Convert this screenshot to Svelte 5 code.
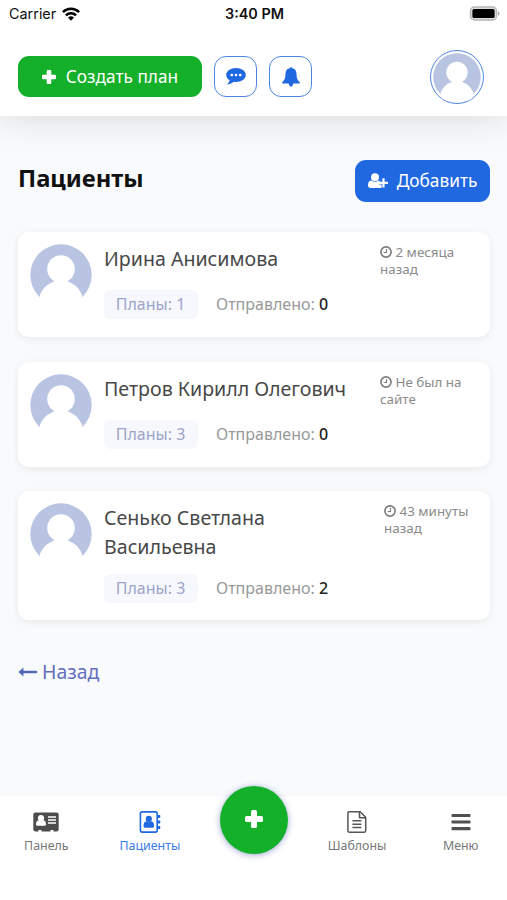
<script>
    let pacientes = [
        {
            nombre: "Ирина Анисимова",
            planes: 1,
            enviados: 0,
            visita: "2 месяца назад",
            ancho: 98,
        },
        {
            nombre: "Петров Кирилл Олегович",
            planes: 3,
            enviados: 0,
            visita: "Не был на сайте",
            ancho: 98,
        },
        {
            nombre: "Сенько Светлана Васильевна",
            planes: 3,
            enviados: 2,
            visita: "43 минуты назад",
            ancho: 94,
        },
    ];
    let activo = "Пациенты";
</script>

{#snippet avatar()}
    <svg class="avatar" viewBox="0 0 62 62">
        <circle cx="31" cy="31" r="30.7" fill="#b9c4e2" />
        <circle cx="31" cy="25" r="13.8" fill="#fff" />
        <path
            d="M25 35.500h12c.2 1.500 1 2.200 3 2.900 5.500 2.200 9.500 6.300 12 12.600L54 62H8l2-11c2.500-6.300 6.500-10.400 12-12.600 2-.7 2.800-1.400 3-2.900z"
            fill="#fff"
        />
    </svg>
{/snippet}

{#snippet mas(size)}
    <svg width={size} height={size} viewBox="0 0 14 14">
        <path
            d="M5.900 0h2.200q1.200 0 1.200 1.200v3.500h3.500q1.200 0 1.200 1.200v2.200q0 1.200-1.200 1.200H9.300v3.500q0 1.200-1.200 1.200H5.900q-1.200 0-1.200-1.200V9.300H1.200Q0 9.300 0 8.100V5.900q0-1.200 1.200-1.200h3.500V1.200Q4.700 0 5.900 0z"
            fill="#fff"
        />
    </svg>
{/snippet}

<div class="pantalla">
    <header>
        <div class="estado">
            <div class="operador">
                <span>Carrier</span>
                <svg width="18" height="14" viewBox="0 0 18 14">
                    <g fill="none" stroke="#000" stroke-width="2.500">
                        <path d="M.9 5.200a11.500 11.500 0 0 1 16.200 0" />
                        <path d="M3.900 8.400a7.200 7.200 0 0 1 10.200 0" />
                    </g>
                    <path d="M9 13.800l-3-3.200a4.300 4.300 0 0 1 6 0z" />
                </svg>
            </div>
            <div class="hora">3:40 PM</div>
            <div class="bateria">
                <svg width="31" height="15" viewBox="0 0 31 15">
                    <rect x="1.500" y="1" width="26" height="13" rx="3.800" fill="#ddd" stroke="#b5b5b5" stroke-width="1.300" />
                    <rect x="3.400" y="2.900" width="22.200" height="9.200" rx="1.600" />
                    <path d="M28.800 5.200c2.200.5 2.200 4.100 0 4.600z" fill="#aaa" />
                </svg>
            </div>
        </div>
        <div class="barra">
            <button class="btn verde">{@render mas(14)}<span>Создать план</span></button>
            <button class="btn cuadro" aria-label="Сообщения">
                <svg width="20" height="17" viewBox="0 0 20 17">
                    <path d="M10 0c5.500 0 9.800 3.100 9.800 7s-4.300 7-9.800 7c-.8 0-1.500-.1-2.200-.2C6 15.300 4 16.200 1.900 16.500c-.5 0-.6-.5-.3-.8 1-.9 1.700-1.700 2-3.400C1.500 11 .2 9.100.2 7c0-3.900 4.300-7 9.800-7z" fill="#2068df" />
                    <g fill="#fff">
                        <circle cx="5.800" cy="7" r="1.350" />
                        <circle cx="10" cy="7" r="1.350" />
                        <circle cx="14.200" cy="7" r="1.350" />
                    </g>
                </svg>
            </button>
            <button class="btn cuadro" aria-label="Уведомления">
                <svg width="18" height="20" viewBox="0 0 18 20">
                    <path d="M9 .2c.7 0 1.100.4 1.200 1.100 2.800.4 4.200 2.500 4.300 5.500.1 4.400.9 6.500 3.300 8.500.3.500 0 1.100-.7 1.100h-5.900c-.2 1.900-1 3.200-2.200 3.200s-2-1.300-2.200-3.200H.9c-.7 0-1-.6-.7-1.100 2.400-2 3.200-4.100 3.300-8.500.1-3 1.500-5.100 4.300-5.500C7.900.6 8.300.2 9 .2z" fill="#2068df" />
                </svg>
            </button>
            <div class="perfil">{@render avatar()}</div>
        </div>
    </header>

    <main>
        <div class="encabezado">
            <h1>Пациенты</h1>
            <button class="btn azul">
                <svg width="20" height="16" viewBox="0 0 20 16">
                    <g fill="#fff">
                        <circle cx="7" cy="4.300" r="4" />
                        <path d="M3.200 7.400c2.200 1.800 5.400 1.800 7.600 0 .8.200 1.400.5 1.900 1H11v3.200h2.600V15H2.500C1 15 0 14.100 0 12.600 0 10 .8 7.500 3.200 7.400z" />
                        <path d="M14.400 5.300h2.200v3.500H20V11h-3.400v3.500h-2.200V11H11V8.800h3.400z" />
                    </g>
                </svg>
                <span>Добавить</span>
            </button>
        </div>

        {#each pacientes as p}
            <div class="card">
                {@render avatar()}
                <div class="datos">
                    <div class="nombre">{p.nombre}</div>
                    <div class="planes">
                        <span class="etiqueta">Планы: {p.planes}</span>
                        <span class="enviado">Отправлено: <b>{p.enviados}</b></span>
                    </div>
                </div>
                <div class="visita" style="width: {p.ancho}px">
                    <svg width="12" height="12" viewBox="0 0 12 12">
                        <g fill="none" stroke="#7c7c7c">
                            <circle cx="6" cy="6" r="5.100" stroke-width="1.600" />
                            <path d="M6.500 3v3.500H3.700" stroke-width="1.100" />
                        </g>
                    </svg>
                    {p.visita}
                </div>
            </div>
        {/each}

        <a class="volver" href="#atras">
            <svg width="20" height="10" viewBox="0 0 20 10">
                <path d="M5.400.6v3.200h13q.8 0 .8.700v1q0 .7-.8.700h-13v3.200L.4 5z" fill="#5468b8" />
            </svg>
            <span>Назад</span>
        </a>
    </main>

    <nav>
        <div class="item">
            <svg width="26" height="22" viewBox="0 0 26 22">
                <path d="M2.500 1.500h21Q25.700 1.500 25.700 3.500v15q0 2-2.200 2h-3v-1.500h-3v1.500h-9v-1.500h-3v1.500H2.500Q.3 20.500.3 18.500v-15Q.3 1.500 2.500 1.500z" fill="#4d4d4d" />
                <g fill="#fff">
                    <circle cx="8" cy="7.200" r="3.100" />
                    <path d="M5.500 9.300q2.500 2 5 0 2.500.3 2.500 4.200 0 1.300-1.200 1.300H4.200Q3 14.800 3 13.500q0-3.900 2.500-4.200z" />
                    <path d="M15 5.300h8v1.500h-8zM15 8.300h8v1.500h-8zM15 11.300h8v1.500h-8z" />
                </g>
            </svg>
            <span>Панель</span>
        </div>
        <div class="item" class:activo={activo == "Пациенты"}>
            <svg width="22" height="22" viewBox="0 0 22 22">
                <g fill="#2068df">
                    <rect x="1.400" y=".9" width="16.800" height="20.200" rx="1.800" fill="none" stroke="#2068df" stroke-width="1.600" />
                    <path d="M19 4h1.500q.8 0 .8.800v1.400q0 .8-.8.800H19zM19 9.500h1.500q.8 0 .8.800v1.400q0 .8-.8.800H19zM19 15h1.500q.8 0 .8.800v1.400q0 .8-.8.800H19z" />
                    <circle cx="9.800" cy="7.900" r="3.100" />
                    <path d="M7.300 10.200q2.500 2 5 0 2.800.5 2.800 4.800 0 1.700-1.500 1.700H6q-1.500 0-1.500-1.700 0-4.300 2.800-4.800z" />
                </g>
            </svg>
            <span>Пациенты</span>
        </div>
        <div class="item">
            <button class="crear" aria-label="Создать">{@render mas(18)}</button>
        </div>
        <div class="item">
            <svg width="20" height="22" viewBox="0 0 20 22">
                <g fill="none" stroke="#555" stroke-width="1.500" stroke-linejoin="round">
                    <path d="M2.200.8h11l5.500 5.500v13.500q0 1.400-1.400 1.400H2.200q-1.300 0-1.300-1.400V2.100Q.9.800 2.200.8z" />
                    <path d="M12.500.8v6h6.200M5.400 9.800h9M5.400 13.200h9M5.400 16.600h9" />
                </g>
            </svg>
            <span>Шаблоны</span>
        </div>
        <div class="item">
            <svg width="20" height="22" viewBox="0 0 20 22">
                <g fill="#505050">
                    <rect x=".5" y="2.900" width="19" height="3.100" rx=".8" />
                    <rect x=".5" y="9.500" width="19" height="3.100" rx=".8" />
                    <rect x=".5" y="16.100" width="19" height="3.100" rx=".8" />
                </g>
            </svg>
            <span>Меню</span>
        </div>
    </nav>
</div>

<style>
    :global(body) {
        background: #f8f9fb;
    }

    .pantalla {
        display: flex;
        flex-direction: column;
        box-sizing: border-box;
        height: 900px;
        overflow: hidden;
        background: #f8fafc;
        font-family: "Noto Sans", sans-serif;
        color: #111;
    }

    .pantalla svg {
        display: block;
        flex-shrink: 0;
    }

    header {
        box-sizing: border-box;
        height: 116px;
        background: #fff;
        box-shadow: 0 0 36px rgba(0, 0, 0, 0.15);
    }

    .estado {
        display: grid;
        grid-template-columns: 1fr 1fr 1fr;
        align-items: center;
        height: 27px;
        padding: 0 7px 0 9px;
        font: 14.4px/27px Inter, sans-serif;
    }

    .operador {
        display: flex;
        align-items: center;
        gap: 6px;
    }

    .hora {
        text-align: center;
        font-weight: 600;
    }

    .bateria {
        justify-self: end;
    }

    .barra {
        display: flex;
        align-items: center;
        height: 54px;
        margin-top: 22.5px;
        padding: 0 23px 0 18px;
        gap: 12px;
    }

    .btn {
        display: flex;
        align-items: center;
        justify-content: center;
        box-sizing: border-box;
        height: 41.5px;
        padding: 0;
        border: 0;
        border-radius: 11px;
        color: #fff;
        font: 17.3px/24px "Noto Sans", sans-serif;
    }

    .verde {
        width: 184px;
        gap: 10px;
        background: #14b02a;
    }

    .cuadro {
        width: 43px;
        border: 1.5px solid #4d86e2;
        border-radius: 12px;
        background: #fff;
    }

    .perfil {
        box-sizing: border-box;
        width: 54px;
        height: 54px;
        margin-left: auto;
        padding: 2px;
        border: 1.5px solid #4d86e2;
        border-radius: 50%;
        overflow: hidden;
    }

    .avatar {
        width: 62px;
        height: 62px;
    }

    .perfil :global(.avatar) {
        width: 48px;
        height: 48px;
    }

    main {
        flex: 1;
        padding: 44px 17px 0 18px;
    }

    .encabezado {
        display: flex;
        justify-content: space-between;
        height: 42px;
        margin-bottom: 30px;
    }

    h1 {
        margin: 0;
        font-size: 23.8px;
        line-height: 36px;
        font-weight: 700;
    }

    .azul {
        width: 135px;
        gap: 9px;
        background: #2068df;
    }

    .card {
        display: flex;
        box-sizing: border-box;
        min-height: 105px;
        margin-bottom: 24.5px;
        padding: 12px 12px 17px;
        border-radius: 11px;
        background: #fff;
        box-shadow: 0 2px 9px rgba(0, 0, 0, 0.07);
    }

    .datos {
        flex: 1;
        margin-left: 12px;
    }

    .nombre {
        max-width: 250px;
        font-size: 19.6px;
        line-height: 29.3px;
        color: #484848;
    }

    .planes {
        display: flex;
        align-items: center;
        gap: 18px;
        margin-top: 17px;
        font-size: 16px;
        line-height: 29px;
        color: #999;
    }

    .card:nth-child(4) .planes {
        margin-top: 12px;
    }

    .etiqueta {
        box-sizing: border-box;
        width: 94px;
        padding-right: 1px;
        border-radius: 6px;
        background: #f7f8fe;
        color: #9ca5c8;
        text-align: center;
    }

    .enviado b {
        font-weight: 500;
        color: #222;
    }

    .visita {
        font-size: 13.4px;
        line-height: 17.4px;
        color: #8a8a8a;
    }

    .visita svg {
        display: inline-block;
        vertical-align: -1px;
    }

    .volver {
        display: inline-flex;
        align-items: center;
        gap: 4px;
        margin-top: 13px;
        color: #6270bd;
        font-size: 19.4px;
        line-height: 29px;
        text-decoration: none;
    }

    nav {
        display: grid;
        grid-template-columns: repeat(5, 103.6px);
        justify-content: center;
        height: 104px;
        background: #fff;
        box-shadow: 0 0 3px rgba(0, 0, 0, 0.04);
    }

    .item {
        display: flex;
        flex-direction: column;
        align-items: center;
        padding-top: 15px;
        font-size: 12.4px;
        line-height: 18px;
        color: #777;
    }

    .item span {
        margin-top: 4px;
    }

    .activo {
        color: #3b7ce4;
    }

    .crear {
        display: flex;
        align-items: center;
        justify-content: center;
        flex-shrink: 0;
        width: 68px;
        height: 68px;
        margin-top: -25px;
        padding: 0 0 2px;
        border: 0;
        border-radius: 50%;
        background: #14b02a;
        box-shadow: 0 1px 6px rgba(40, 60, 150, 0.45);
    }
</style>
